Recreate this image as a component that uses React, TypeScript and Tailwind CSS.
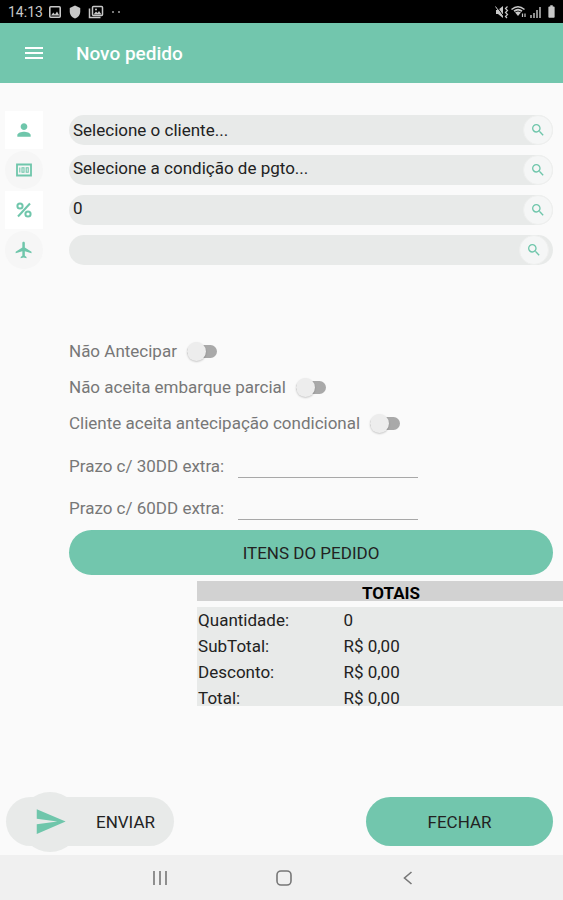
import type { ReactNode } from "react";
import { MdBatteryFull, MdFlight, MdMenu, MdPerson, MdSearch, MdSend, MdShield } from "react-icons/md";

interface PickerRowProps {
  id: string;
  label: string;
  value: string;
  icon: ReactNode;
  tile: "square" | "round";
  raised?: boolean;
  inset?: boolean;
}

const totals = [
  { label: "Quantidade:", value: "0" },
  { label: "SubTotal:", value: "R$ 0,00" },
  { label: "Desconto:", value: "R$ 0,00" },
  { label: "Total:", value: "R$ 0,00" },
];

function PercentIcon() {
  return (
    <svg width="18" height="18" viewBox="0 0 18 18" fill="none" stroke="currentColor" strokeWidth="2">
      <circle cx="5" cy="5" r="2.600" />
      <circle cx="13" cy="13" r="2.600" />
      <path d="M15 2.500L3 15.500" />
    </svg>
  );
}

function BanknoteIcon() {
  return (
    <svg width="18" height="16" viewBox="0 0 18 16" fill="none" stroke="currentColor">
      <path d="M2 2.500h14v11H2z" strokeWidth="1.800" />
      <path d="M4.800 5.500v5M7 5.800h2v4.400H7zM11.200 5.800h2v4.400h-2z" strokeWidth="1.100" />
    </svg>
  );
}

function PictureIcon() {
  return (
    <svg width="14" height="14" viewBox="0 0 14 14" fill="none">
      <rect x="1.800" y="1.800" width="10.400" height="10.400" rx="1" stroke="currentColor" strokeWidth="1.600" />
      <path d="M3 10.500l2.300-3 1.700 2L9 6.500l2.300 4z" fill="currentColor" />
    </svg>
  );
}

function GalleryIcon() {
  return (
    <svg width="16" height="14" viewBox="0 0 16 14" fill="none" stroke="currentColor">
      <rect x="4.500" y="1.500" width="10" height="9" rx="1" strokeWidth="1.500" />
      <path d="M1.500 3.500v9h11" strokeWidth="1.500" />
      <path d="M5.500 9.500l2.500-3 1.500 1.500 1.500-2 2.500 3.500z" fill="currentColor" stroke="none" />
      <circle cx="8" cy="4.500" r="1" fill="currentColor" stroke="none" />
    </svg>
  );
}

function StatusBar() {
  return (
    <div className="flex h-[23px] items-center justify-between bg-black pl-2 pr-1 text-[#c8c8c8]">
      <div className="flex items-center gap-1">
        <span className="w-9 text-[14px] leading-5">14:13</span>
        <PictureIcon />
        <MdShield size={14} className="mx-0.5" />
        <GalleryIcon />
        <span className="ml-1 flex gap-1">
          <i className="size-0.5 rounded-full bg-[#a0a0a0]" />
          <i className="size-0.5 rounded-full bg-[#a0a0a0]" />
        </span>
      </div>
      <div className="flex items-center gap-0.5">
        <svg width="14" height="14" viewBox="0 0 14 14" fill="none">
          <path d="M1 5h2l5-4v12L3 9H1z" fill="currentColor" />
          <path d="M1.500 1l7 10" stroke="#000" strokeWidth="1" />
          <path d="M0.500 1.500l7 10" stroke="currentColor" strokeWidth="1" />
          <path d="M12.500 1.500l-2 2 2 2-2 2 2 2-2 2 1.500 1.500" stroke="currentColor" strokeWidth="1.200" />
        </svg>
        <svg width="16" height="14" viewBox="0 0 16 14" fill="none">
          <path d="M0.500 4.500Q7 -1 13.500 4.500" stroke="currentColor" strokeWidth="1.500" />
          <path d="M2.500 5.500Q7 2 11.500 5.500L7 11z" fill="currentColor" />
          <path d="M4 7Q7 5 10 7" stroke="#000" strokeWidth="0.800" />
          <path d="M11.500 12V8.500M14 8.500V12" stroke="currentColor" strokeWidth="1.200" />
        </svg>
        <svg width="13" height="14" viewBox="0 0 13 14" fill="currentColor">
          <path d="M1 10h2v3H1zM4 8h2v5H4zM7 5h2v8H7z" opacity="0.7" />
          <path d="M10 2h2v11h-2z" opacity="0.7" />
        </svg>
        <MdBatteryFull size={15} />
      </div>
    </div>
  );
}

function PickerRow({ id, label, value, icon, tile, raised, inset }: PickerRowProps) {
  return (
    <div className="flex h-[30px] items-center">
      <div className="flex w-[69px] shrink-0 pl-[5px]">
        <span
          className={`flex size-[38px] items-center justify-center text-[#6fc6ab] ${
            tile === "square" ? "bg-white" : "rounded-full bg-[#f6f6f6]"
          }`}
        >
          {icon}
        </span>
      </div>
      <div className={`flex h-[30px] min-w-0 flex-1 rounded-full bg-[#e8eae9] ${inset ? "pr-1" : ""}`}>
        <input
          id={id}
          aria-label={label}
          defaultValue={value}
          className={`min-w-0 flex-1 bg-transparent pl-1 text-[17px] leading-6 text-[#222] outline-none ${
            raised ? "pb-1" : ""
          }`}
        />
        <button
          type="button"
          aria-label={`Buscar ${label}`}
          className="flex size-[30px] shrink-0 items-center justify-center rounded-full border border-[#eeefee] bg-[#f5f6f6] text-[#6fc6ab]"
        >
          <MdSearch size={16} />
        </button>
      </div>
    </div>
  );
}

function SwitchRow({ id, label }: { id: string; label: string }) {
  return (
    <div className="flex h-5 items-center gap-[10px]">
      <label htmlFor={id}>{label}</label>
      <input
        id={id}
        type="checkbox"
        role="switch"
        className="relative h-[13px] w-[30px] appearance-none rounded-full bg-[#a9a9a9] before:absolute before:-top-[3px] before:left-0 before:size-[19px] before:rounded-full before:bg-[#ededed] before:shadow-[0_1px_2px_rgba(0,0,0,0.2)] checked:before:left-3"
      />
    </div>
  );
}

function TermRow({ id, label }: { id: string; label: string }) {
  return (
    <div className="flex h-[26px] items-start">
      <label htmlFor={id} className="w-[169px] leading-6">
        {label}
      </label>
      <input
        id={id}
        inputMode="numeric"
        className="h-6 w-[180px] border-b border-[#a8a8a8] bg-transparent outline-none"
      />
    </div>
  );
}

export default function App() {
  return (
    <div className="flex min-h-screen flex-col bg-[#fafafa] font-[Roboto,sans-serif] text-[17px] leading-5 text-[#222]">
      <StatusBar />

      <header className="flex h-[60px] items-center bg-[#72c6ad] pl-[22px] text-white">
        <button type="button" aria-label="Menu">
          <MdMenu size={24} />
        </button>
        <h1 className="pl-[30px] pt-0.5 text-[19px] font-medium leading-6">Novo pedido</h1>
      </header>

      <main className="flex flex-1 flex-col">
        <div className="flex flex-col gap-[10px] pr-[10px] pt-8">
          <PickerRow id="cliente" label="Cliente" value="Selecione o cliente..." icon={<MdPerson size={20} />} tile="square" />
          <PickerRow
            id="pagamento"
            label="Condição de pagamento"
            value="Selecione a condição de pgto..."
            icon={<BanknoteIcon />}
            tile="round"
            raised
          />
          <PickerRow id="desconto" label="Desconto" value="0" icon={<PercentIcon />} tile="square" raised />
          <PickerRow id="transporte" label="Transportadora" value="" icon={<MdFlight size={20} />} tile="round" inset />
        </div>

        <div className="flex flex-col gap-4 pl-[69px] pt-[76px] text-[#777]">
          <SwitchRow id="antecipar" label="Não Antecipar" />
          <SwitchRow id="parcial" label="Não aceita embarque parcial" />
          <SwitchRow id="condicional" label="Cliente aceita antecipação condicional" />
        </div>

        <div className="flex flex-col gap-4 pl-[69px] pt-[21px] text-[#777]">
          <TermRow id="prazo30" label="Prazo c/ 30DD extra:" />
          <TermRow id="prazo60" label="Prazo c/ 60DD extra:" />
        </div>

        <div className="pl-[69px] pr-[10px] pt-2">
          <button type="button" className="h-[45px] w-full rounded-full bg-[#72c6ad]">
            ITENS DO PEDIDO
          </button>
        </div>

        <table className="ml-auto mt-1.5 w-[65%] border-separate border-spacing-0">
          <thead>
            <tr>
              <th
                colSpan={2}
                className="h-[26px] border-b-[6px] border-[#fafafa] bg-[#d2d2d2] p-0 pl-[22px] pt-1 text-center font-bold leading-4 text-black"
              >
                TOTAIS
              </th>
            </tr>
          </thead>
          <tbody className="bg-[#e8eae9] leading-4">
            {totals.map((row) => (
              <tr key={row.label} className="group">
                <th scope="row" className="w-2/5 p-0 py-[5px] pl-px text-left font-normal group-last:pb-0">
                  {row.label}
                </th>
                <td className="p-0 py-[5px] group-last:pb-0">{row.value}</td>
              </tr>
            ))}
          </tbody>
        </table>

        <div className="mt-auto flex items-center justify-between pb-[3px] pl-1.5 pr-[10px]">
          <button type="button" className="flex h-[49px] w-[168px] items-center rounded-full bg-[#e8eae9] pl-[14px]">
            <span className="-my-2 flex size-[60px] shrink-0 items-center justify-center rounded-full bg-[#e8eae9] text-[#6fc6ab]">
              <MdSend size={33} />
            </span>
            <span className="pl-4">ENVIAR</span>
          </button>
          <button type="button" className="my-1.5 h-[49px] w-1/3 min-w-[187px] rounded-full bg-[#72c6ad]">
            FECHAR
          </button>
        </div>
      </main>

      <nav className="flex h-[45px] items-center justify-center gap-[100px] bg-[#f0f0f0] pl-1 text-[#777]">
        <button type="button" aria-label="Recentes">
          <svg width="24" height="24" viewBox="0 0 24 24" stroke="currentColor" strokeWidth="1.6">
            <path d="M6 5v14M12 5v14M18 5v14" />
          </svg>
        </button>
        <button type="button" aria-label="Início">
          <svg width="24" height="24" viewBox="0 0 24 24" fill="none" stroke="currentColor" strokeWidth="1.6">
            <rect x="5" y="5" width="14" height="14" rx="4" />
          </svg>
        </button>
        <button type="button" aria-label="Voltar">
          <svg width="24" height="24" viewBox="0 0 24 24" fill="none" stroke="currentColor" strokeWidth="1.6">
            <path d="M15.500 6l-7 6 7 6" />
          </svg>
        </button>
      </nav>
    </div>
  );
}
